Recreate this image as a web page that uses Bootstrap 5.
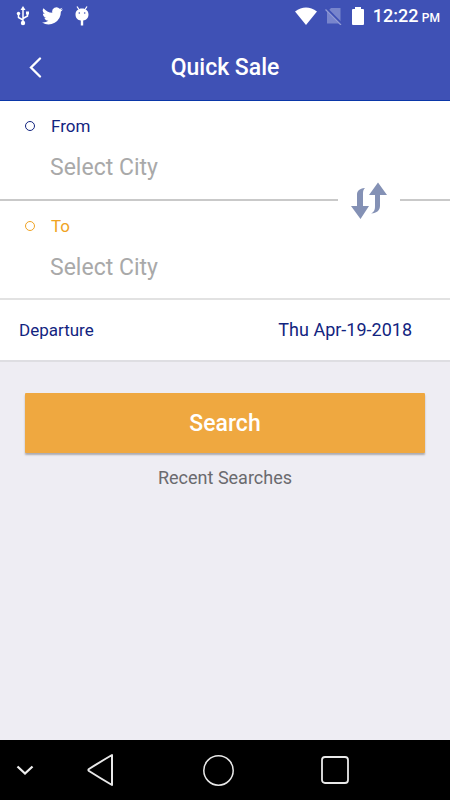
<!DOCTYPE html>
<html lang="en">
<head>
<meta charset="utf-8">
<meta name="viewport" content="width=device-width, initial-scale=1">
<title>Quick Sale</title>
<link href="https://cdn.jsdelivr.net/npm/bootstrap@5.3.0/dist/css/bootstrap.min.css" rel="stylesheet">
<style>
  body { font-family: Roboto, "Noto Sans", sans-serif; background: #eeedf3; font-size: 17px; line-height: 24px; }
  svg { display: block; flex: none; }
  .indigo { background: #3f51b5; }
  .status-bar { height: 32px; padding: 0 10px 0 16px; }
  .status-left { gap: 12px; }
  .status-right { gap: 8px; }
  .clock { font-size: 18px; font-weight: 500; padding-top: 2px; }
  .clock small { font-size: 12px; margin-left: -1px; }
  .app-bar { height: 69px; padding-top: 3px; border-bottom: 1px solid #0b37a8; }
  .app-bar h1 { font-size: 23px; line-height: 32px; font-weight: 500; }
  .back-btn { width: 70px; }
  .plain-btn { background: none; border: 0; padding: 0; }
  .place { padding: 13px 24px 15px; }
  .place-from { border-bottom: 2px solid #c9c9c9; }
  .place-to { padding-bottom: 14px; border-bottom: 2px solid #e2e2e2; }
  .place-label { gap: 16px; margin-bottom: 14px; }
  .ring { width: 10px; height: 10px; margin-left: 1px; border: 1px solid currentColor; border-radius: 50%; }
  .city-input { width: 100%; height: 32px; padding: 0 0 0 26px; border: 0; background: none; font-size: 23px; line-height: 32px; color: #333; }
  .city-input::placeholder { color: #a9a9a9; opacity: 1; }
  .navy { color: #12247f; }
  .amber { color: #f0a323; }
  /* swap button sits over the line between the two places */
  .swap-btn { right: 50px; bottom: -22px; width: 62px; height: 40px; background: #fff; z-index: 1; }
  .departure { height: 62px; padding: 0 38px 0 19px; border-bottom: 2px solid #dedee2; }
  .date-input { width: 160px; border: 0; padding: 0; background: none; font-size: 18px; }
  .actions { padding: 31px 25px 0; }
  .search-btn { height: 60px; padding: 8px 12px 6px; font-size: 23px; font-weight: 500; background: #efa840; border: 0; border-radius: 1px; box-shadow: 0 2px 2px rgba(0, 0, 0, .28); }
  .search-btn:hover { background: #e79d31; }
  .recent { margin-top: 13px; font-size: 18px; color: #6a6a6e; }
  .system-nav { height: 60px; padding: 0 56px 0 9px; }
  .nav-hide { width: 32px; }
</style>
</head>
<body class="d-flex flex-column min-vh-100">
<div class="status-bar indigo text-white d-flex align-items-center justify-content-between">
  <div class="status-left d-flex align-items-center">
    <svg width="14" height="20" viewBox="0 0 14 20" fill="none" stroke="#fff" stroke-width="1.500"><path d="M7 16V3M7 14L2.500 11.500V7M7 12.500L11.500 10V7"/><path d="M7 0l2.500 4h-5zM10 5.500h3v3h-3z" fill="#fff" stroke="none"/><circle cx="2.500" cy="7.500" r="1.700" fill="#fff" stroke="none"/><circle cx="7" cy="17" r="2.200" fill="#fff" stroke="none"/></svg>
    <svg width="21" height="18" viewBox="0 0 24 20" fill="#fff"><path d="M24 2.400a10 10 0 0 1-2.800.8A5 5 0 0 0 23.300.5a10 10 0 0 1-3.100 1.200 4.900 4.900 0 0 0-8.400 4.500A14 14 0 0 1 1.700 1a4.900 4.900 0 0 0 1.500 6.600A5 5 0 0 1 1 7v.1a4.900 4.900 0 0 0 3.900 4.800 5 5 0 0 1-2.200.1 4.900 4.900 0 0 0 4.600 3.400A9.900 9.900 0 0 1 0 17.400a14 14 0 0 0 21.500-12.400A10 10 0 0 0 24 2.400z"/></svg>
    <svg width="14" height="20" viewBox="0 0 14 20"><path d="M2 .5l2 3M12 .5l-2 3" stroke="#fff" stroke-width="1.300"/><path d="M7 2.500C3 2.500.5 5 .5 8.500S3 14.300 5.800 14.500V19.500h2.400v-5C11 14.300 13.500 12 13.500 8.500S11 2.500 7 2.500z" fill="#fff"/><circle cx="4.300" cy="7" r=".8" fill="#3f51b5"/><circle cx="9.700" cy="7" r=".8" fill="#3f51b5"/></svg>
  </div>
  <div class="status-right d-flex align-items-center">
    <svg width="22" height="18" viewBox="0 0 22 18"><path d="M0 4.500Q11-3.500 22 4.500L11 18z" fill="#fff"/></svg>
    <svg width="18" height="18" viewBox="0 0 18 18"><path d="M6 1h9.500v15.500H2V5z" fill="#7885cc"/><path d="M1 1.500L17 17.500" stroke="#3f51b5" stroke-width="3"/><path d="M.5 2.500L16 18" stroke="#929cd5" stroke-width="1.300"/></svg>
    <svg width="14" height="20" viewBox="0 0 14 20"><path d="M4 1h6v2h2q1 0 1 1v14q0 1-1 1H2q-1 0-1-1V4q0-1 1-1h2z" fill="#fff"/></svg>
    <span class="clock">12:22 <small>PM</small></span>
  </div>
</div>
<header class="app-bar indigo text-white d-flex align-items-center">
  <button class="back-btn plain-btn d-flex justify-content-center py-2" aria-label="Back"><svg width="14" height="22" viewBox="0 0 14 22" fill="none" stroke="#fff" stroke-width="2.300" stroke-linecap="round"><path d="M12 1.500L3 10.500l9 9"/></svg></button>
  <h1 class="flex-fill text-center m-0">Quick Sale</h1>
  <div class="back-btn"></div>
</header>
<main class="flex-fill">
  <form>
    <div class="bg-white">
      <div class="place place-from position-relative">
        <label for="from" class="place-label navy d-flex align-items-center"><span class="ring"></span>From</label>
        <input id="from" class="city-input" type="text" placeholder="Select City">
        <button type="button" class="swap-btn plain-btn position-absolute d-flex align-items-center justify-content-center" aria-label="Swap cities">
          <svg width="38" height="38" viewBox="0 0 38 38" fill="#8491b5"><path d="M15 6C9 6.500 7 9 7 13v11H1l9.500 13L19 24h-6V12c0-3 .3-4.500 2-6zM28 .5L19 13h6v11c0 4-1 6-4 7.500 6-.5 9-3 9-8V13H37z"/></svg>
        </button>
      </div>
      <div class="place place-to">
        <label for="to" class="place-label amber d-flex align-items-center"><span class="ring"></span>To</label>
        <input id="to" class="city-input" type="text" placeholder="Select City">
      </div>
      <div class="departure navy d-flex align-items-center justify-content-between">
        <label for="date">Departure</label>
        <input id="date" class="date-input navy text-end" type="text" value="Thu Apr-19-2018">
      </div>
    </div>
    <div class="actions">
      <button type="submit" class="search-btn btn w-100 text-white">Search</button>
      <p class="recent text-center mb-0">Recent Searches</p>
    </div>
  </form>
</main>
<nav class="system-nav bg-black d-flex align-items-center" aria-label="System">
  <button class="nav-hide plain-btn d-flex justify-content-center" aria-label="Hide"><svg width="18" height="12" viewBox="0 0 18 12" fill="none" stroke="#eee" stroke-width="2.300"><path d="M1.500 2.500L9 9.500l7.500-7"/></svg></button>
  <div class="row g-0 flex-fill">
    <button class="col plain-btn d-flex justify-content-center" aria-label="Back"><svg width="30" height="34" viewBox="0 0 30 34" fill="none" stroke="#e8e8e8" stroke-width="2" stroke-linejoin="round"><path d="M27 2v30Q15 25 4 18q-1.200-1 0-2Q15 9 27 2z"/></svg></button>
    <button class="col plain-btn d-flex justify-content-center" aria-label="Home"><svg width="34" height="34" viewBox="0 0 34 34" fill="none" stroke="#e8e8e8" stroke-width="1.500"><circle cx="17.500" cy="17.500" r="14.700"/></svg></button>
    <button class="col plain-btn d-flex justify-content-center" aria-label="Overview"><svg width="30" height="34" viewBox="0 0 30 34" fill="none" stroke="#e8e8e8" stroke-width="1.800"><rect x="2" y="4" width="26" height="26" rx="3"/></svg></button>
  </div>
</nav>
<script src="https://cdn.jsdelivr.net/npm/bootstrap@5.3.0/dist/js/bootstrap.bundle.min.js"></script>
</body>
</html>
